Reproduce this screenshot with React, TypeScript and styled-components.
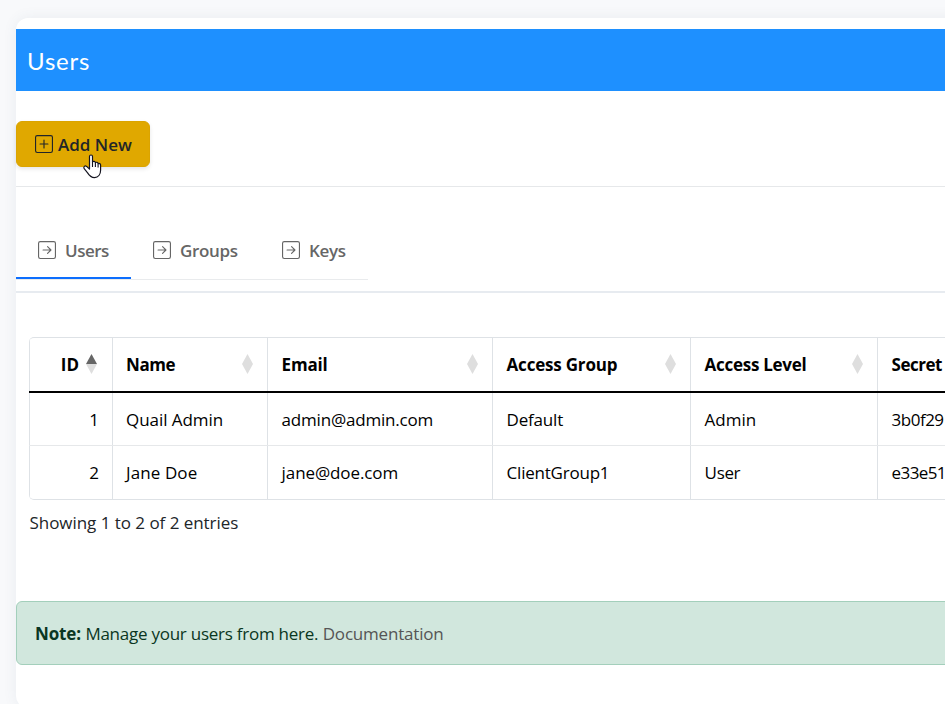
import React from "react";
import styled, { createGlobalStyle } from "styled-components";
import { BsPlusSquare, BsArrowRightSquare } from "react-icons/bs";

const GlobalStyle = createGlobalStyle`
  * { box-sizing: border-box; }
  html, body { margin: 0; height: 100%; overflow: hidden; }
  body {
    background: #f8f9fb;
    color: #212529;
    font-family: "Segoe UI", "Open Sans", "Noto Sans", sans-serif;
    font-size: 17px;
    line-height: 27px;
  }
  #root { height: 100%; }
`;

const Page = styled.div`
  height: 704px;
  padding: 18px 0 0 16px;
  overflow: hidden;
`;

const Card = styled.main`
  width: 1400px;
  height: 690px;
  padding-top: 11px;
  background: #fff;
  border-radius: 12px;
  box-shadow: 0 0 14px rgba(70, 90, 120, 0.08);
`;

const Label = styled.span<{ $track?: number }>`
  white-space: nowrap;
  letter-spacing: ${(p) => p.$track ?? 0}px;
`;

const TitleBar = styled.h1`
  display: flex;
  align-items: center;
  height: 62px;
  margin: 0 0 30px;
  padding: 2px 0 0 11px;
  background: #1e90ff;
  color: #fff;
  font: 400 24px/30px "Century Gothic", Lato, sans-serif;
`;

const Actions = styled.div`
  height: 66px;
  border-bottom: 1px solid #e6e8ea;
`;

const AddButton = styled.button`
  position: relative;
  display: flex;
  align-items: center;
  gap: 5px;
  width: 134px;
  height: 46px;
  padding: 1px 0 0 18px;
  border: 1px solid #dba400;
  border-radius: 6px;
  background: #e0a800;
  color: #212529;
  font: inherit;
  font-weight: 600;
  box-shadow: 0 2px 4px rgba(0, 0, 0, 0.1);
  svg { width: 18px; height: 18px; flex: none; margin-top: -2px; }
`;

const Pointer = styled.svg`
  position: absolute;
  left: 65px;
  top: 32px;
  && { width: 20px; height: 25px; margin: 0; }
`;

const TabsArea = styled.nav`
  height: 106px;
  padding-top: 34px;
  border-bottom: 2px solid #e7ebf0;
`;

const TabList = styled.div`
  display: flex;
  width: 352px;
  height: 59px;
  border-bottom: 1px solid #e9ebed;
`;

const Tab = styled.a<{ $width: number; $active?: boolean }>`
  display: flex;
  align-items: center;
  gap: 9px;
  width: ${(p) => p.$width}px;
  height: 58px;
  padding: 2px 0 0 22px;
  border-bottom: 2px solid ${(p) => (p.$active ? "#0d6efd" : "transparent")};
  color: #666;
  font-weight: 600;
  svg { width: 18px; height: 18px; flex: none; }
`;

const Table = styled.div`
  margin: 44px 0 0 13px;
  border: 1px solid #dee2e6;
  border-left: 0;
  border-radius: 5px;
  overflow: hidden;
  color: #000;
`;

const Row = styled.div<{ $head?: boolean }>`
  display: grid;
  grid-template-columns: 83px 155px 225px 198px 187px 1fr;
  height: ${(p) => (p.$head ? 55 : 53)}px;
  border-bottom: ${(p) => (p.$head ? "2px solid #000" : "1px solid #e6e8ea")};
  font-weight: ${(p) => (p.$head ? 700 : 400)};
  &:last-child { border-bottom: 0; }
`;

const Cell = styled.div<{ $align?: "end" }>`
  display: flex;
  align-items: center;
  justify-content: ${(p) => (p.$align === "end" ? "flex-end" : "flex-start")};
  padding: 0 13px;
  border-left: 1px solid #dee2e6;
  &:nth-child(n + 3) { padding-left: 13.6px; }
`;

const Sorter = styled.svg`
  width: 11px;
  height: 20px;
  margin: -1px 1.5px 0 auto;
  flex: none;
  ${Cell}:first-child & { margin-left: 7px; margin-right: 2px; }
`;

const Summary = styled.div`
  height: 101px;
  padding: 9px 0 0 13.5px;
`;

const Note = styled.aside`
  display: flex;
  align-items: center;
  gap: 4.5px;
  height: 64px;
  padding: 1px 0 0 18px;
  border: 1px solid #a3cfbb;
  border-radius: 6px;
  background: #d1e7dd;
  color: #0a3622;
  b { font-weight: 700; }
`;

const DocLink = styled.a`
  color: #555;
`;

const SortIcon = ({ asc }: { asc?: boolean }) => (
  <Sorter viewBox="0 0 11 20">
    <path d="M0 10 5.5 0 11 10Z" fill={asc ? "#666" : "#dedede"} />
    <path d="M0 10 5.5 20 11 10Z" fill="#dedede" />
  </Sorter>
);

const HandCursor = () => (
  <Pointer viewBox="0 0 20 25">
    <path
      d="M7.5 2.5C7.5.5 10.5.5 10.5 2.5V8C11.2 6.8 13.4 7.2 13.4 8.7 14.2 7.8 16.1 8.4 16.1 9.7 17 9 18.6 9.7 18.6 11V16C18.6 20.5 16.2 23.6 12.5 23.6 8.7 23.6 7.2 21.5 5.6 18.9L2.2 14.7C1 12.8 3 11.2 4.6 12.4L7.5 15Z"
      fill="#fff" stroke="#14141f" strokeWidth="1.2" strokeLinejoin="round"
    />
    <path d="M10.5 8V13M13.4 9V13M16.1 10V13.5" fill="none" stroke="#14141f" strokeWidth="1.1" />
  </Pointer>
);

type Text = [string, number];

const headings: Text[] = [
  ["Name", -0.4],
  ["Email", -0.2],
  ["Access Group", -0.2],
  ["Access Level", -0.28],
  ["Secret", -0.5],
];

const rows: { id: string; cells: Text[] }[] = [
  { id: "1", cells: [["Quail Admin", -0.05], ["admin@admin.com", -0.2], ["Default", -0.2], ["Admin", 0], ["3b0f29", -0.5]] },
  { id: "2", cells: [["Jane Doe", 0.1], ["jane@doe.com", -0.1], ["ClientGroup1", -0.22], ["User", -0.35], ["e33e51", -0.6]] },
];

export default function App() {
  return (
    <Page>
      <GlobalStyle />
      <Card>
        <TitleBar><Label $track={0.8}>Users</Label></TitleBar>
        <Actions>
          <AddButton>
            <BsPlusSquare />
            <Label>Add New</Label>
            <HandCursor />
          </AddButton>
        </Actions>
        <TabsArea>
          <TabList>
            <Tab $width={115} $active><BsArrowRightSquare /><Label $track={-0.5}>Users</Label></Tab>
            <Tab $width={129}><BsArrowRightSquare /><Label $track={-0.35}>Groups</Label></Tab>
            <Tab $width={108}><BsArrowRightSquare /><Label $track={-0.3}>Keys</Label></Tab>
          </TabList>
        </TabsArea>
        <Table>
          <Row $head>
            <Cell $align="end"><Label>ID</Label><SortIcon asc /></Cell>
            {headings.map(([text, track]) => (
              <Cell key={text}><Label $track={track}>{text}</Label>{text !== "Secret" && <SortIcon />}</Cell>
            ))}
          </Row>
          {rows.map((row) => (
            <Row key={row.id}>
              <Cell $align="end"><Label>{row.id}</Label></Cell>
              {row.cells.map(([text, track]) => (
                <Cell key={text}><Label $track={track}>{text}</Label></Cell>
              ))}
            </Row>
          ))}
        </Table>
        <Summary><Label $track={-0.04}>Showing 1 to 2 of 2 entries</Label></Summary>
        <Note>
          <Label as="b" $track={-0.15}>Note:</Label>
          <Label $track={-0.25}>Manage your users from here.</Label>
          <DocLink><Label $track={-0.2}>Documentation</Label></DocLink>
        </Note>
      </Card>
    </Page>
  );
}
